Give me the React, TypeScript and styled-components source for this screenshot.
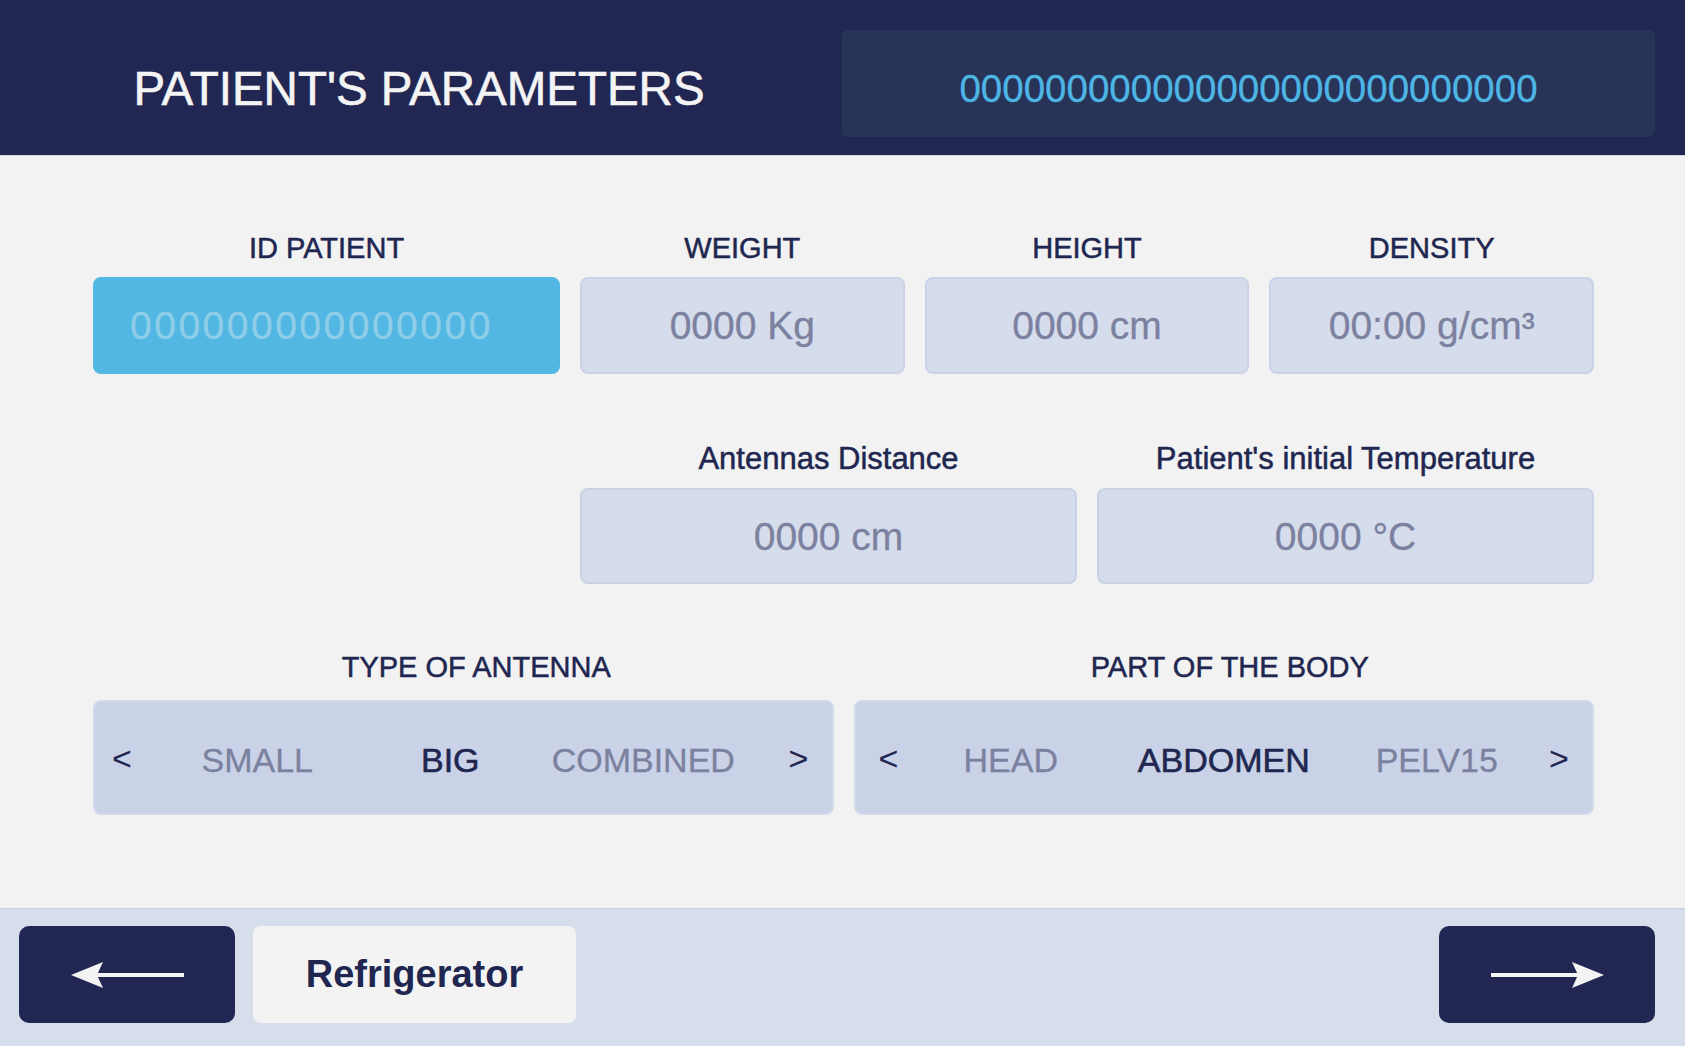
import React from 'react'
import styled, { createGlobalStyle } from 'styled-components'

const navy = '#212752'
const ink = '#20264f'
const muted = '#7b819f'

const GlobalStyle = createGlobalStyle`
  html, body {
    margin: 0;
    padding: 0;
    background: #f2f2f2;
    font-family: 'Liberation Sans', Arial, Helvetica, sans-serif;
  }
  * {
    box-sizing: border-box;
  }
`

const Screen = styled.div`
  display: flex;
  flex-direction: column;
  height: 100vh;
  background: #f2f2f2;
`

const Header = styled.header`
  display: grid;
  grid-template-columns: 842px 1fr;
  height: 156px;
  padding: 30px 30px 18px 0;
  background: ${navy};
  border-bottom: 1px solid #cfd3de;
`

const Title = styled.h1`
  margin: 0;
  display: flex;
  align-items: center;
  justify-content: center;
  padding-top: 10px;
  padding-right: 4px;
  font-size: 47.5px;
  font-weight: 400;
  line-height: 1;
  color: #f4f4f4;
  -webkit-text-stroke: 0.6px #f4f4f4;
`

const SessionBox = styled.div`
  display: flex;
  align-items: center;
  justify-content: center;
  padding-top: 12px;
  background: #283358;
  border-radius: 6px;
  font-size: 38.5px;
  line-height: 1;
  color: #4db6e4;
  -webkit-text-stroke: 0.3px #4db6e4;
`

const Main = styled.main`
  flex: 1;
  padding: 75px 91px 0 93px;
`

const Row = styled.div<{ columns: string; spacing: number }>`
  display: grid;
  grid-template-columns: ${(p) => p.columns};
  gap: 20px;
  margin-bottom: ${(p) => p.spacing}px;
`

const Spacer = styled.div``

const Field = styled.div<{ gap?: number }>`
  display: flex;
  flex-direction: column;
  gap: ${(p) => p.gap ?? 12}px;
`

const Label = styled.div<{ size?: number; nudge?: number }>`
  text-align: center;
  padding-left: ${(p) => (p.nudge ?? 0) * 2}px;
  font-size: ${(p) => p.size ?? 29}px;
  line-height: 34px;
  color: ${ink};
  -webkit-text-stroke: 0.5px ${ink};
  white-space: nowrap;
`

const ValueBox = styled.div<{ height: number; highlight?: boolean }>`
  display: flex;
  align-items: center;
  justify-content: ${(p) => (p.highlight ? 'flex-start' : 'center')};
  height: ${(p) => p.height}px;
  padding-left: ${(p) => (p.highlight ? 35 : 0)}px;
  background: ${(p) => (p.highlight ? '#52b8e3' : '#d5dceb')};
  border: 2px solid ${(p) => (p.highlight ? '#52b8e3' : '#c9d2e6')};
  border-radius: 8px;
  font-size: 39px;
  letter-spacing: ${(p) => (p.highlight ? 2.5 : 0)}px;
  line-height: 1;
  color: ${(p) => (p.highlight ? '#8fcde9' : muted)};
  -webkit-text-stroke: 0.3px ${(p) => (p.highlight ? '#8fcde9' : muted)};
  white-space: nowrap;
`

const Picker = styled.div`
  display: flex;
  align-items: center;
  height: 115px;
  padding: 0 23px;
  background: #c9d2e6;
  border: 2px solid #d3dbea;
  border-radius: 8px;
`

const Chevron = styled.span<{ inset?: number }>`
  width: 20px;
  flex-shrink: 0;
  margin-left: ${(p) => -(p.inset ?? 0)}px;
  font-size: 34px;
  line-height: 1;
  color: ${ink};
  text-align: center;
`

const Track = styled.div<{ shift?: number }>`
  flex: 1;
  display: flex;
  justify-content: center;
  padding-right: ${(p) => p.shift ?? 0}px;
`

const Option = styled.span<{ cell: number; active?: boolean }>`
  flex-shrink: 0;
  width: ${(p) => p.cell}px;
  padding-top: 4px;
  text-align: center;
  font-size: 34px;
  line-height: 1;
  color: ${(p) => (p.active ? ink : muted)};
  -webkit-text-stroke: ${(p) => (p.active ? 0.6 : 0.3)}px
    ${(p) => (p.active ? ink : muted)};
  white-space: nowrap;
`

const Footer = styled.footer`
  display: flex;
  align-items: flex-start;
  height: 138px;
  padding: 17px 30px 0 19px;
  background: #d6deeb;
  border-top: 1px solid #c6cfe2;
`

const NavButton = styled.button<{ push?: boolean }>`
  display: flex;
  align-items: center;
  justify-content: center;
  width: 216px;
  height: 97px;
  margin-left: ${(p) => (p.push ? 'auto' : '0')};
  padding: 0;
  background: ${navy};
  border: none;
  border-radius: 10px;
  cursor: pointer;
`

const TextButton = styled.button`
  width: 323px;
  height: 97px;
  margin-left: 18px;
  background: #f3f3f3;
  border: none;
  border-radius: 8px;
  font-family: inherit;
  font-size: 38px;
  font-weight: 700;
  color: ${ink};
  cursor: pointer;
`

function Arrow({ dir }: { dir: 'left' | 'right' }) {
  return (
    <svg
      width="113"
      height="26"
      viewBox="0 0 113 26"
      style={{ transform: dir === 'right' ? 'scaleX(-1)' : undefined }}
    >
      <polygon points="0,13 32,0 26,13 32,26" fill="#f3f3f3" />
      <rect x="26" y="11" width="87" height="4" fill="#f3f3f3" />
    </svg>
  )
}

type PickerProps = {
  options: string[]
  active: number
  cell: number
  shift?: number
  inset?: number
}

function Selector({ options, active, cell, shift, inset }: PickerProps) {
  return (
    <Picker>
      <Chevron inset={inset}>&lt;</Chevron>
      <Track shift={shift}>
        {options.map((o, i) => (
          <Option key={o} cell={cell} active={i === active}>
            {o}
          </Option>
        ))}
      </Track>
      <Chevron>&gt;</Chevron>
    </Picker>
  )
}

export default function App() {
  return (
    <Screen>
      <GlobalStyle />
      <Header>
        <Title>PATIENT'S PARAMETERS</Title>
        <SessionBox>{'0'.repeat(27)}</SessionBox>
      </Header>

      <Main>
        <Row columns="467px repeat(3, 1fr)" spacing={68}>
          <Field>
            <Label>ID PATIENT</Label>
            <ValueBox height={97} highlight>
              {'0'.repeat(15)}
            </ValueBox>
          </Field>
          <Field>
            <Label>WEIGHT</Label>
            <ValueBox height={97}>0000 Kg</ValueBox>
          </Field>
          <Field>
            <Label>HEIGHT</Label>
            <ValueBox height={97}>0000 cm</ValueBox>
          </Field>
          <Field>
            <Label>DENSITY</Label>
            <ValueBox height={97}>00:00 g/cm³</ValueBox>
          </Field>
        </Row>

        <Row columns="467px 1fr 1fr" spacing={66}>
          <Spacer />
          <Field>
            <Label size={31}>Antennas Distance</Label>
            <ValueBox height={96}>0000 cm</ValueBox>
          </Field>
          <Field>
            <Label size={31}>Patient's initial Temperature</Label>
            <ValueBox height={96}>0000 °C</ValueBox>
          </Field>
        </Row>

        <Row columns="1fr 1fr" spacing={0}>
          <Field gap={16}>
            <Label nudge={13}>TYPE OF ANTENNA</Label>
            <Selector
              options={['SMALL', 'BIG', 'COMBINED']}
              active={1}
              cell={193}
              shift={20}
              inset={6}
            />
          </Field>
          <Field gap={16}>
            <Label nudge={6}>PART OF THE BODY</Label>
            <Selector
              options={['HEAD', 'ABDOMEN', 'PELV15']}
              active={1}
              cell={213}
            />
          </Field>
        </Row>
      </Main>

      <Footer>
        <NavButton aria-label="Back">
          <Arrow dir="left" />
        </NavButton>
        <TextButton>Refrigerator</TextButton>
        <NavButton push aria-label="Next">
          <Arrow dir="right" />
        </NavButton>
      </Footer>
    </Screen>
  )
}
